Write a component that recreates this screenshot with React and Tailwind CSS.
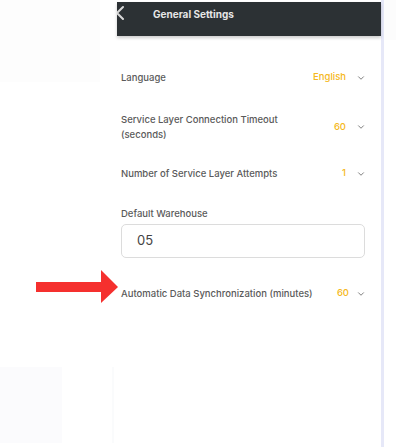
import { ChevronDown, ChevronLeft } from 'lucide-react'

const Row = ({ label, value, gap = 'gap-[10px]', className = '' }) => (
  <div className={`flex items-center justify-between pr-[15px] ${className}`}>
    <span className="text-[9.5px] leading-[15px] font-medium text-[#5a5a5a]">{label}</span>
    <div className={`flex items-center ${gap}`}>
      <span className="text-[9.5px] font-medium text-[#f5b820]">{value}</span>
      <ChevronDown className="w-[10px] h-[10px] text-[#666]" strokeWidth={2} />
    </div>
  </div>
)

export default function App() {
  return (
    <div
      className="relative w-[396px] h-[447px] bg-white flex overflow-hidden"
      style={{ fontFamily: 'Inter, "Noto Sans", sans-serif' }}
    >
      {/* faint background left */}
      <div className="w-[117px] shrink-0 flex flex-col">
        <div className="h-[82px] w-[100px] bg-[#fdfdfd]"></div>
        <div className="flex-1"></div>
        <div className="h-[76px] flex gap-[50px] mb-[4px]">
          <div className="w-[62px] bg-[#fbfbfd]"></div>
          <div className="w-[2px] bg-[#fafbfc]"></div>
        </div>
      </div>

      {/* settings column */}
      <div className="w-[267px] shrink-0 border-r-[3px] border-[#e6e8f8] flex flex-col">
        <div className="mt-[2px] h-[34px] bg-[#2c3134] flex items-start pt-[4px] shadow-[0_2px_3px_rgba(0,0,0,0.2)] relative z-10 overflow-hidden">
          <ChevronLeft className="w-[24px] h-[24px] -ml-[9px] -mt-[5px] shrink-0 text-[#d8d8d8]" strokeWidth={2} />
          <span className="ml-[21px] mt-[1px] text-[10px] leading-[14px] font-bold text-[#e6e6e6]">General Settings</span>
        </div>

        <div className="pl-[4px] flex flex-col">
          <Row className="mt-[34px]" label="Language" value="English" />
          <Row
            className="mt-[27px]"
            label={<>Service Layer Connection Timeout<br />(seconds)</>}
            value="60"
          />
          <Row className="mt-[24px]" label="Number of Service Layer Attempts" value="1" />

          <span className="mt-[25px] text-[9.5px] leading-[15px] font-medium text-[#5a5a5a]">Default Warehouse</span>
          <div className="mt-[3px] mr-[16px] h-[34px] rounded-[5px] border border-[#dcdcdc] flex items-center pl-[15px]">
            <span className="text-[13px] font-normal text-[#444]">05</span>
          </div>

          <Row className="mt-[28px]" gap="gap-[7px]" label="Automatic Data Synchronization (minutes)" value="60" />
        </div>
      </div>

      <div className="flex-1 flex flex-col">
        <div className="h-[40px] bg-[#fcfcfc]"></div>
      </div>

      {/* red pointer arrow */}
      <svg className="absolute left-[36px] top-[270px]" width="83" height="34" viewBox="0 0 83 34">
        <polygon points="0,12 65,12 65,0 82,17 65,33 65,22 0,22" fill="#f5302e" />
      </svg>
    </div>
  )
}
